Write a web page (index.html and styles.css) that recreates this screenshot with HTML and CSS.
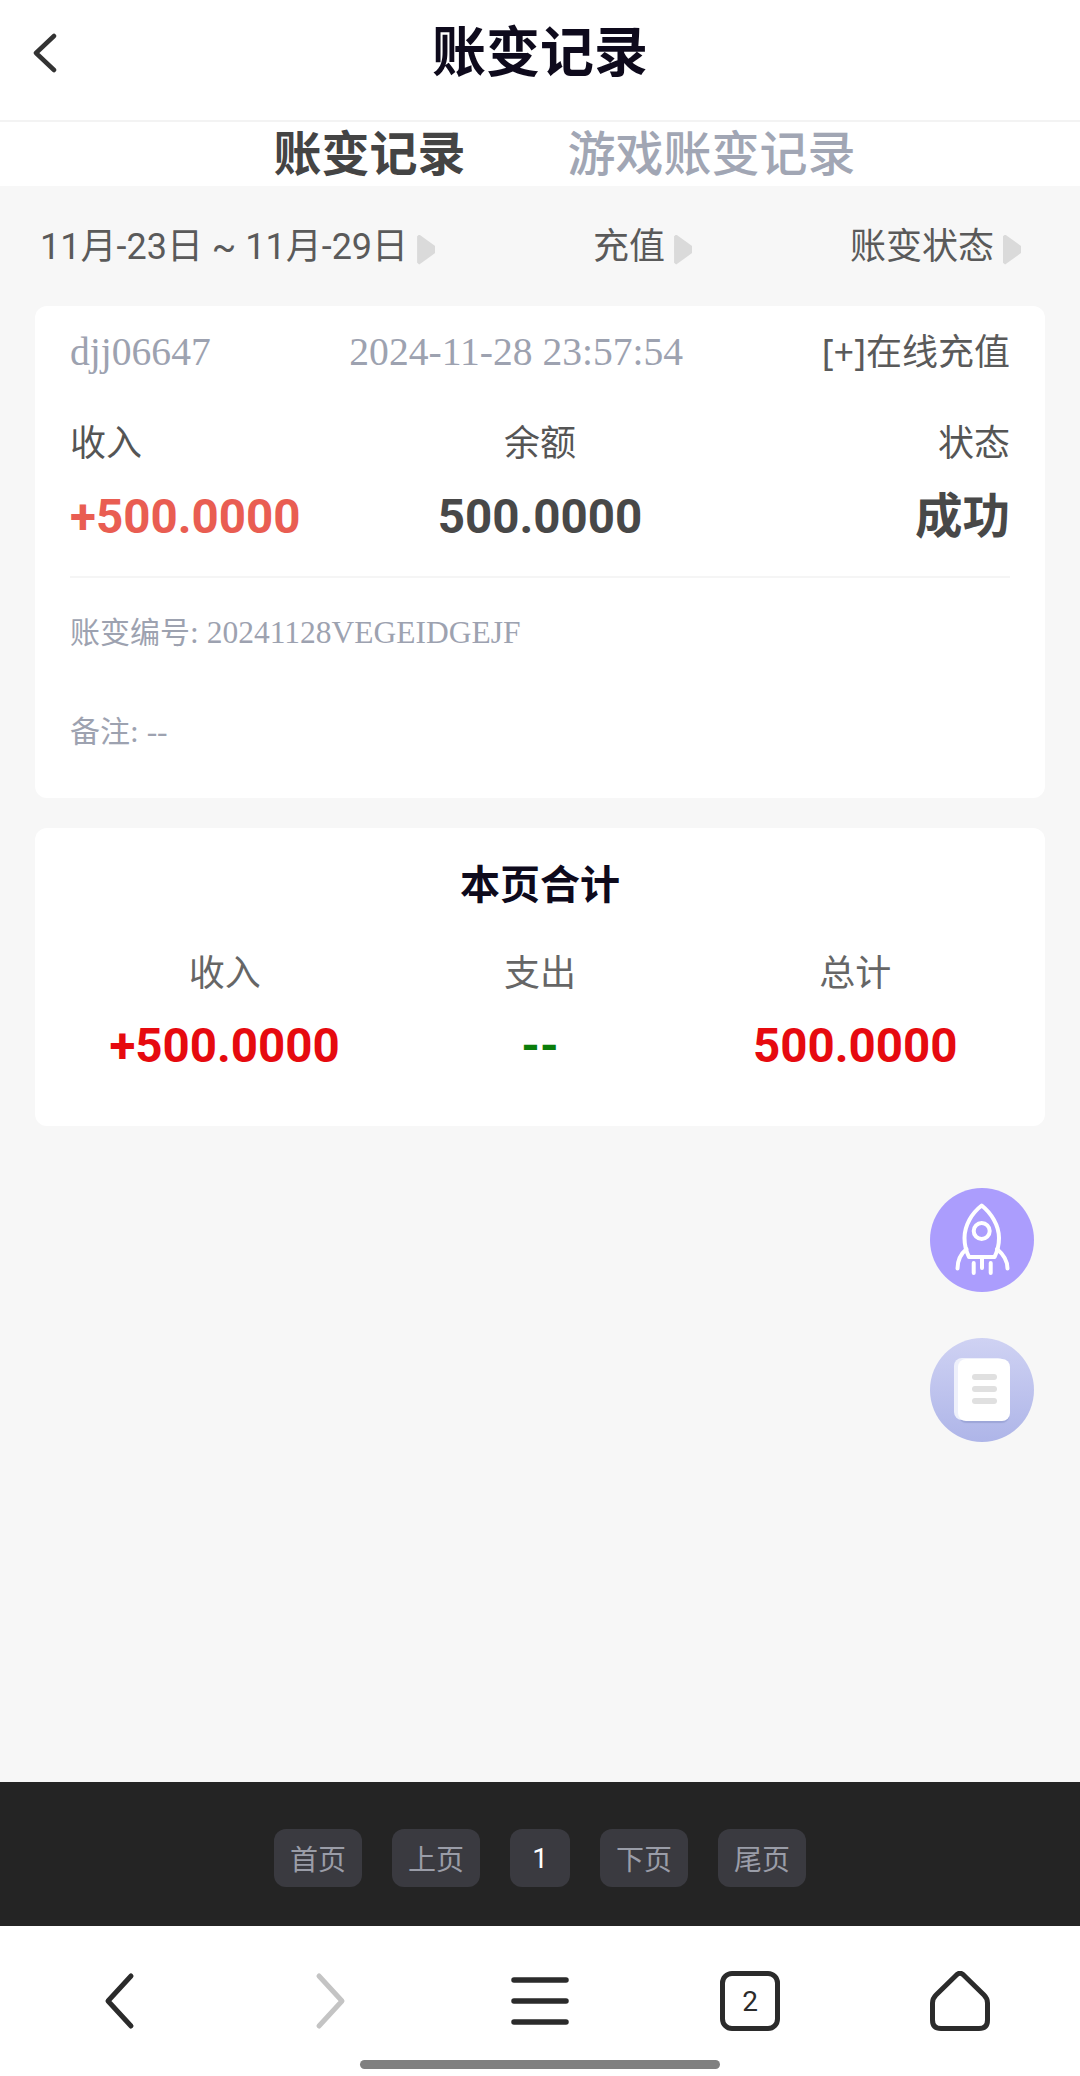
FILE: index.html
```html
<!DOCTYPE html>
<html lang="zh-CN">
<head>
    <meta charset="UTF-8">
    <meta name="viewport" content="width=device-width, initial-scale=1.0">
    <title>账变记录</title>
    <link rel="stylesheet" href="styles.css">
</head>
<body>
    <header class="top-bar">
        <svg class="back-icon" viewBox="0 0 24 40" fill="none" stroke="#333" stroke-width="4.5" stroke-linecap="round" stroke-linejoin="round"><path d="M21 3 L3 20 L21 37"/></svg>
        <h1>账变记录</h1>
    </header>

    <nav class="tabs">
        <span class="tab active">账变记录</span>
        <span class="tab">游戏账变记录</span>
    </nav>

    <main class="content">
        <div class="filters">
            <div class="filter">11月-23日 ~ 11月-29日<i class="caret"></i></div>
            <div class="filter">充值<i class="caret"></i></div>
            <div class="filter">账变状态<i class="caret"></i></div>
        </div>

        <section class="card record">
            <div class="record-head">
                <span class="muted">djj06647</span>
                <span class="muted">2024-11-28 23:57:54</span>
                <span class="record-type">[+]在线充值</span>
            </div>
            <div class="stats">
                <div class="stat">
                    <div class="stat-label">收入</div>
                    <div class="stat-value income">+500.0000</div>
                </div>
                <div class="stat center">
                    <div class="stat-label">余额</div>
                    <div class="stat-value">500.0000</div>
                </div>
                <div class="stat right">
                    <div class="stat-label">状态</div>
                    <div class="stat-value">成功</div>
                </div>
            </div>
            <div class="divider"></div>
            <div class="note first">账变编号<span class="latin">: 20241128VEGEIDGEJF</span></div>
            <div class="note">备注<span class="latin">: --</span></div>
        </section>

        <section class="card summary">
            <h2>本页合计</h2>
            <div class="summary-grid">
                <div class="stat center">
                    <div class="stat-label">收入</div>
                    <div class="stat-value red">+500.0000</div>
                </div>
                <div class="stat center">
                    <div class="stat-label">支出</div>
                    <div class="stat-value green">--</div>
                </div>
                <div class="stat center">
                    <div class="stat-label">总计</div>
                    <div class="stat-value red">500.0000</div>
                </div>
            </div>
        </section>

        <!-- botoes flutuantes -->
        <div class="float-btn rocket">
            <svg viewBox="0 0 104 104" fill="none" stroke="#fff" stroke-width="4" stroke-linecap="round" stroke-linejoin="round">
                <path d="M51.7 17.5 C42 25 34.5 37 34.5 50 C34.5 57 36 63 39 69 H64.5 C67.5 63 69 57 69 50 C69 37 61 25 51.7 17.5 Z"/>
                <circle cx="51.7" cy="43" r="8"/>
                <path d="M36.5 61 C30.5 66 27.5 73 27.5 80.5"/>
                <path d="M67 61 C73 66 77.5 73 77.5 80.5"/>
                <path d="M43.7 75 V85 M52 69 V80 M60.7 75 V85"/>
            </svg>
        </div>
        <div class="float-btn doc">
            <div class="paper">
                <span></span>
                <span></span>
                <span></span>
            </div>
        </div>
    </main>

    <div class="pager">
        <span class="page-btn">首页</span>
        <span class="page-btn">上页</span>
        <span class="page-btn current">1</span>
        <span class="page-btn">下页</span>
        <span class="page-btn">尾页</span>
    </div>

    <footer class="browser-bar">
        <svg class="nav-icon" viewBox="0 0 60 60" fill="none" stroke="#2b2b2b" stroke-width="5" stroke-linecap="round" stroke-linejoin="round"><path d="M41 5 L18 30 L41 55"/></svg>
        <svg class="nav-icon" viewBox="0 0 60 60" fill="none" stroke="#c4c4c4" stroke-width="5" stroke-linecap="round" stroke-linejoin="round"><path d="M19 5 L42 30 L19 55"/></svg>
        <svg class="nav-icon" viewBox="0 0 60 60" fill="none" stroke="#2b2b2b" stroke-width="5.5" stroke-linecap="round"><path d="M4 9 H56 M4 30 H56 M4 51 H56"/></svg>
        <div class="tab-count">2</div>
        <svg class="nav-icon" viewBox="0 0 60 60" fill="none" stroke="#2b2b2b" stroke-width="5" stroke-linejoin="round"><path d="M27 3.5 L6 24 Q2.5 27.5 2.5 32 V49 Q2.5 57.5 11 57.5 H49 Q57.5 57.5 57.5 49 V32 Q57.5 27.5 54 24 L33 3.5 Q30 1 27 3.5 Z"/></svg>
        <div class="home-indicator"></div>
    </footer>
</body>
</html>
```

FILE: styles.css
```css
/* Geral */
* {
    box-sizing: border-box;
}

body {
    font-family: Roboto, "Noto Sans CJK SC", sans-serif;
    margin: 0;
    min-height: 100vh;
    display: flex;
    flex-direction: column;
    background-color: #f7f7f7;
    color: #555;
}

/* Topo */
.top-bar {
    position: relative;
    height: 122px;
    padding-bottom: 12px;
    display: flex;
    align-items: center;
    justify-content: center;
    background-color: #fff;
    border-bottom: 2px solid #f3f3f3;
}

.top-bar h1 {
    margin: 0;
    font-size: 54px;
    line-height: 70px;
    font-weight: 700;
    color: #0e0a1c;
}

.back-icon {
    position: absolute;
    left: 33px;
    top: 33px;
    width: 24px;
    height: 40px;
}

.tabs {
    height: 64px;
    padding-left: 49px;
    padding-top: 2px;
    display: flex;
    align-items: center;
    justify-content: center;
    gap: 102px;
    background-color: #fff;
}

.tab {
    font-size: 48px;
    line-height: 60px;
    font-weight: 500;
    color: #a1a6b4;
}

.tab.active {
    font-weight: 700;
    color: #444;
}

/* Conteudo */
.content {
    position: relative;
    flex: 1;
    padding: 0 35px;
}

.filters {
    height: 120px;
    margin: 0 -35px;
    padding: 2px 59px 0 40px;
    display: flex;
    align-items: center;
    justify-content: space-between;
}

.filter {
    display: flex;
    align-items: center;
    gap: 9px;
    font-size: 36px;
    line-height: 44px;
    color: #5a5a5a;
}

.caret {
    display: block;
    width: 18px;
    height: 30px;
    margin-top: 5px;
    background-color: #dadada;
    clip-path: polygon(0 6%, 12% 0, 100% 38%, 100% 62%, 12% 100%, 0 94%);
}

.card {
    background-color: #fff;
    border-radius: 12px;
    margin-bottom: 30px;
}

.record {
    height: 492px;
    padding: 24px 35px 0;
}

.record-head {
    display: flex;
    justify-content: space-between;
    line-height: 44px;
    font-size: 36px;
}

.muted {
    font-family: "Liberation Serif", "Noto Sans CJK SC", serif;
    font-size: 39.6px;
    color: #9da2b0;
}

.record-type {
    font-family: "Noto Sans", "Noto Sans CJK SC", sans-serif;
    color: #5a5a5a;
}

.stats {
    display: grid;
    grid-template-columns: 1fr auto 1fr;
    margin-top: 48px;
}

.stat-label {
    font-size: 36px;
    line-height: 44px;
    color: #555;
}

.stat-value {
    margin-top: 21px;
    font-size: 47.5px;
    line-height: 60px;
    font-weight: 700;
    color: #484848;
}

.stat.center {
    text-align: center;
}

.stat.right {
    text-align: right;
}

.income {
    color: #e95d52;
}

.divider {
    height: 2px;
    margin-top: 29px;
    background-color: #f5f5f5;
}

.note {
    margin-top: 55px;
    font-size: 30px;
    line-height: 44px;
    color: #9da2b0;
}

.note.first {
    margin-top: 33px;
}

.latin {
    font-family: "Liberation Serif", "Noto Sans CJK SC", serif;
    font-size: 31.5px;
}

.summary {
    height: 298px;
    padding: 30px 32px 0;
}

.summary h2 {
    margin: 0;
    text-align: center;
    font-size: 40px;
    line-height: 56px;
    font-weight: 700;
    color: #0e0a1c;
}

.summary-grid {
    display: grid;
    grid-template-columns: repeat(3, 1fr);
    margin-top: 38px;
}

.summary .stat-label {
    color: #666;
}

.summary .stat-value {
    margin-top: 20px;
    font-size: 47.5px;
}

.red {
    color: #e60a0f;
}

.green {
    color: #0a7d0a;
}

/* Botoes flutuantes */
.float-btn {
    position: absolute;
    left: 930px;
    width: 104px;
    height: 104px;
    border-radius: 50%;
    display: flex;
    align-items: center;
    justify-content: center;
}

.rocket {
    top: 1002px;
    background-color: #ab9dfd;
}

.rocket svg {
    display: block;
    width: 104px;
    height: 104px;
}

.doc {
    top: 1152px;
    background: linear-gradient(180deg, #cfd2f3, #aeb5e8);
}

.paper {
    width: 52px;
    height: 62px;
    margin: 0 0 0 4px;
    padding-top: 15px;
    display: flex;
    flex-direction: column;
    align-items: center;
    gap: 6px;
    background-color: #fff;
    border-radius: 8px;
    box-shadow: -4px -1px 0 #eef0fb, 0 3px 1px -1px #9da6d8;
}

.paper span {
    display: block;
    width: 25px;
    height: 6px;
    border-radius: 3px;
    background-color: #e0e0e0;
}

/* Paginacao */
.pager {
    height: 144px;
    padding-top: 8px;
    display: flex;
    align-items: center;
    justify-content: center;
    gap: 30px;
    background-color: #242424;
}

.page-btn {
    height: 58px;
    padding: 0 16px;
    display: flex;
    align-items: center;
    font-size: 28px;
    color: #9a9da8;
    background-color: #3a3a40;
    border-radius: 12px;
}

.page-btn.current {
    padding: 0 22px;
    color: #fff;
}

/* Barra do navegador */
.browser-bar {
    position: relative;
    height: 150px;
    padding: 0 15px;
    display: grid;
    grid-template-columns: repeat(5, 1fr);
    align-items: center;
    justify-items: center;
    background-color: #fff;
}

.nav-icon {
    display: block;
    width: 60px;
    height: 60px;
}

.tab-count {
    width: 60px;
    height: 60px;
    display: flex;
    align-items: center;
    justify-content: center;
    border: 5px solid #2b2b2b;
    border-radius: 12px;
    font-size: 28px;
    color: #2b2b2b;
}

.home-indicator {
    position: absolute;
    left: 360px;
    bottom: 7px;
    width: 360px;
    height: 9px;
    border-radius: 5px;
    background-color: #808080;
}
```
